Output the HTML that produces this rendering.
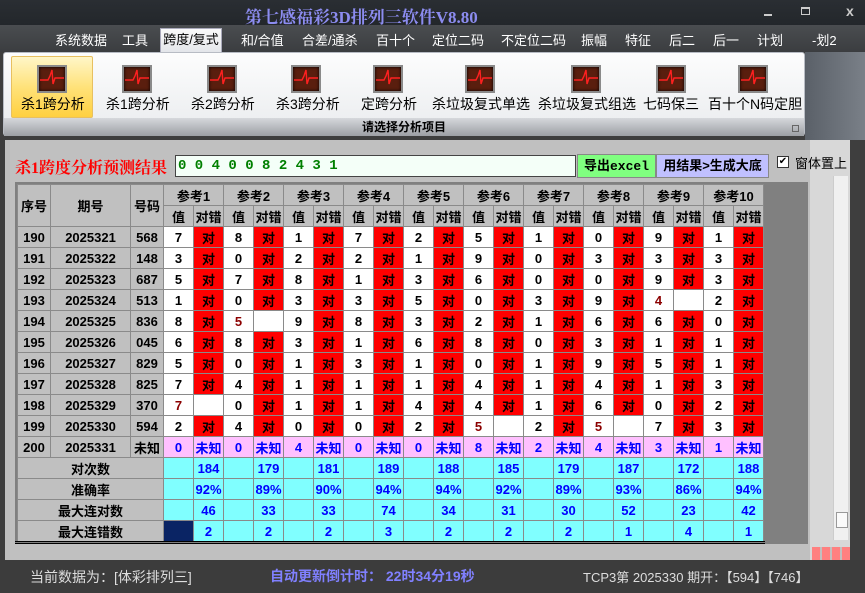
<!DOCTYPE html>
<html><head><meta charset="utf-8"><style>
*{margin:0;padding:0;box-sizing:border-box}
body{width:865px;height:593px;overflow:hidden;background:#3e3e3e;font-family:"Liberation Sans","Noto Sans CJK SC",sans-serif;position:relative}
.abs{position:absolute}
#title{left:0;top:0;width:865px;height:25px;background:linear-gradient(#2a2e33,#23272b);}
#menu{left:0;top:25px;width:865px;height:27px;background:linear-gradient(#4a4d50,#3b3d40);}
.mi{position:absolute;top:30px;color:#fff;font-size:13px;white-space:nowrap}
#tab{left:160px;top:28px;width:62px;height:24px;background:linear-gradient(#fafafa,#e4e6ea);border:1px solid #aab;border-bottom:none;color:#000;font-size:13px;text-align:center;line-height:22px}
#ribbon{left:3px;top:52px;width:802px;height:84px;background:linear-gradient(#fdfdfd,#e9ebee);border:1px solid #b8bcc4;border-radius:3px}
#rlab{left:4px;top:118px;width:800px;height:18px;background:linear-gradient(#d6d8dc,#9c9fa4);font-size:12px;font-weight:bold;text-align:center;line-height:18px;color:#000}
#sel{left:11px;top:56px;width:82px;height:62px;background:linear-gradient(#fff6c8,#ffe27a 50%,#ffd040);border:1px solid #e8c060;border-radius:2px}
.ic{position:absolute;top:65px;width:30px;height:28px;background:#5a1e0e;border:2px solid #8a8a8a;box-shadow:inset 0 0 3px #000}
.ic svg{position:absolute;left:0;top:0}
.il{position:absolute;top:94px;font-size:14px;color:#000;white-space:nowrap}
#panel{left:5px;top:140px;width:805px;height:420px;background:#c0c0c0}
#rside{left:810px;top:140px;width:40px;height:420px;background:#d8d8d8}
#sb{left:833px;top:176px;width:15px;height:364px;background:#f0f0f0;border-left:1px solid #ccc}
#grid{left:15px;top:182px;width:793px;height:362px;background:#808080}
table{position:absolute;left:17px;top:184px;border-collapse:collapse;table-layout:fixed;font-size:13px;font-weight:bold}
td{border:1px solid #8a8a8a;height:21px;text-align:center;padding:0;overflow:hidden;white-space:nowrap}
.h{background:#c0c0c0;color:#000}
.w{background:#fff;color:#000}
.r{background:#ff0000;color:#000}
.dr{color:#8b0000}
.p{background:#ffc0ff;color:#0000ff}
.c{background:#80ffff;color:#0000ff}
.nv{background:#0a2464}
#status{left:0;top:560px;width:865px;height:33px;background:#3c3c3c}
</style></head><body>
<div id="title" class="abs"></div>
<div class="abs" style="left:245px;top:3px;color:#8c8cf0;font-size:17px;font-weight:bold;font-family:'Liberation Serif','Noto Serif CJK SC',serif">第七感福彩3D排列三软件V8.80</div>
<div class="abs" style="left:764px;top:14px;width:8px;height:2px;background:#ccc"></div>
<div class="abs" style="left:801px;top:7px;width:9px;height:8px;border:1px solid #ccc;border-top-width:2px"></div>
<div class="abs" style="left:846px;top:3px;color:#ccc;font-size:14px;font-weight:bold">x</div>
<div id="menu" class="abs"></div>
<div class="mi" style="left:55px">系统数据</div>
<div class="mi" style="left:122px">工具</div>
<div id="tab" class="abs">跨度/复式</div>
<div class="mi" style="left:241px">和/合值</div>
<div class="mi" style="left:302px">合差/通杀</div>
<div class="mi" style="left:376px">百十个</div>
<div class="mi" style="left:432px">定位二码</div>
<div class="mi" style="left:501px">不定位二码</div>
<div class="mi" style="left:581px">振幅</div>
<div class="mi" style="left:625px">特征</div>
<div class="mi" style="left:669px">后二</div>
<div class="mi" style="left:713px">后一</div>
<div class="mi" style="left:757px">计划</div>
<div class="mi" style="left:812px">-划2</div>
<div class="abs" style="left:805px;top:52px;width:60px;height:88px;background:linear-gradient(90deg,#5a6068,#7a8088)"></div>
<div id="ribbon" class="abs"></div>
<div id="sel" class="abs"></div>
<div id="rlab" class="abs">请选择分析项目</div>
<div class="abs" style="left:792px;top:125px;width:7px;height:7px;border:1px solid #666"></div>

<div class="ic" style="left:37px"><svg width="26" height="24"><path d="M1 13H9L11 9L13 3L14 17L16 11H25" stroke="#ff2020" fill="none" stroke-width="1.4"/></svg></div>
<div class="ic" style="left:122px"><svg width="26" height="24"><path d="M1 13H9L11 9L13 3L14 17L16 11H25" stroke="#ff2020" fill="none" stroke-width="1.4"/></svg></div>
<div class="ic" style="left:207px"><svg width="26" height="24"><path d="M1 13H9L11 9L13 3L14 17L16 11H25" stroke="#ff2020" fill="none" stroke-width="1.4"/></svg></div>
<div class="ic" style="left:291px"><svg width="26" height="24"><path d="M1 13H9L11 9L13 3L14 17L16 11H25" stroke="#ff2020" fill="none" stroke-width="1.4"/></svg></div>
<div class="ic" style="left:373px"><svg width="26" height="24"><path d="M1 13H9L11 9L13 3L14 17L16 11H25" stroke="#ff2020" fill="none" stroke-width="1.4"/></svg></div>
<div class="ic" style="left:465px"><svg width="26" height="24"><path d="M1 13H9L11 9L13 3L14 17L16 11H25" stroke="#ff2020" fill="none" stroke-width="1.4"/></svg></div>
<div class="ic" style="left:571px"><svg width="26" height="24"><path d="M1 13H9L11 9L13 3L14 17L16 11H25" stroke="#ff2020" fill="none" stroke-width="1.4"/></svg></div>
<div class="ic" style="left:656px"><svg width="26" height="24"><path d="M1 13H9L11 9L13 3L14 17L16 11H25" stroke="#ff2020" fill="none" stroke-width="1.4"/></svg></div>
<div class="ic" style="left:738px"><svg width="26" height="24"><path d="M1 13H9L11 9L13 3L14 17L16 11H25" stroke="#ff2020" fill="none" stroke-width="1.4"/></svg></div>
<div class="il" style="left:21px">杀1跨分析</div>
<div class="il" style="left:106px">杀1跨分析</div>
<div class="il" style="left:191px">杀2跨分析</div>
<div class="il" style="left:276px">杀3跨分析</div>
<div class="il" style="left:361px">定跨分析</div>
<div class="il" style="left:432px">杀垃圾复式单选</div>
<div class="il" style="left:538px">杀垃圾复式组选</div>
<div class="il" style="left:643px">七码保三</div>
<div class="il" style="left:708px">百十个N码定胆</div>

<div id="panel" class="abs"></div>
<div id="rside" class="abs"></div>
<div id="sb" class="abs"></div>
<div class="abs" style="left:836px;top:512px;width:12px;height:16px;background:#fafafa;border:1px solid #999"></div>
<div class="abs" style="left:812px;top:547px;width:38px;height:13px;background:repeating-linear-gradient(90deg,#ff8080 0 8px,#c0c0c0 8px 10px)"></div>
<div class="abs" style="left:15px;top:155px;color:#ff0000;font-size:16px;font-weight:bold;font-family:'Liberation Serif','Noto Serif CJK SC',serif">杀1跨度分析预测结果</div>
<div class="abs" style="left:175px;top:155px;width:401px;height:22px;background:#f4fff8;border:1px solid #444;color:#008000;font-family:'Liberation Mono',monospace;font-weight:bold;font-size:14px;line-height:20px;padding-left:2px">0 0 4 0 0 8 2 4 3 1</div>
<div class="abs" style="left:577px;top:154px;width:79px;height:24px;background:#80ff80;border:1px solid #888;font-size:13px;font-weight:bold;line-height:22px;text-align:center">导出<span style="font-family:'Liberation Mono',monospace">excel</span></div>
<div class="abs" style="left:656px;top:154px;width:113px;height:24px;background:#c0c0ff;border:1px solid #888;font-size:13px;font-weight:bold;line-height:22px;text-align:center">用结果&gt;生成大底</div>
<div class="abs" style="left:777px;top:156px;width:12px;height:12px;background:#fff;border:1px solid #333;font-size:10px;line-height:10px;text-align:center">✔</div>
<div class="abs" style="left:795px;top:153px;font-size:13px">窗体置上</div>

<div id="grid" class="abs"></div>
<table>
<colgroup><col style="width:33px"><col style="width:80px"><col style="width:33px">
<col style="width:30px"><col style="width:30px"><col style="width:30px"><col style="width:30px"><col style="width:30px"><col style="width:30px"><col style="width:30px"><col style="width:30px"><col style="width:30px"><col style="width:30px"><col style="width:30px"><col style="width:30px"><col style="width:30px"><col style="width:30px"><col style="width:30px"><col style="width:30px"><col style="width:30px"><col style="width:30px"><col style="width:30px"><col style="width:30px"></colgroup>
<tr class="h"><td class="h" rowspan="2">序号</td><td class="h" rowspan="2">期号</td><td class="h" rowspan="2">号码</td><td class="h" colspan="2">参考1</td><td class="h" colspan="2">参考2</td><td class="h" colspan="2">参考3</td><td class="h" colspan="2">参考4</td><td class="h" colspan="2">参考5</td><td class="h" colspan="2">参考6</td><td class="h" colspan="2">参考7</td><td class="h" colspan="2">参考8</td><td class="h" colspan="2">参考9</td><td class="h" colspan="2">参考10</td></tr>
<tr><td class="h">值</td><td class="h">对错</td><td class="h">值</td><td class="h">对错</td><td class="h">值</td><td class="h">对错</td><td class="h">值</td><td class="h">对错</td><td class="h">值</td><td class="h">对错</td><td class="h">值</td><td class="h">对错</td><td class="h">值</td><td class="h">对错</td><td class="h">值</td><td class="h">对错</td><td class="h">值</td><td class="h">对错</td><td class="h">值</td><td class="h">对错</td></tr>
<tr><td class="h">190</td><td class="h">2025321</td><td class="h">568</td><td class="w">7</td><td class="r">对</td><td class="w">8</td><td class="r">对</td><td class="w">1</td><td class="r">对</td><td class="w">7</td><td class="r">对</td><td class="w">2</td><td class="r">对</td><td class="w">5</td><td class="r">对</td><td class="w">1</td><td class="r">对</td><td class="w">0</td><td class="r">对</td><td class="w">9</td><td class="r">对</td><td class="w">1</td><td class="r">对</td></tr>
<tr><td class="h">191</td><td class="h">2025322</td><td class="h">148</td><td class="w">3</td><td class="r">对</td><td class="w">0</td><td class="r">对</td><td class="w">2</td><td class="r">对</td><td class="w">2</td><td class="r">对</td><td class="w">1</td><td class="r">对</td><td class="w">9</td><td class="r">对</td><td class="w">0</td><td class="r">对</td><td class="w">3</td><td class="r">对</td><td class="w">3</td><td class="r">对</td><td class="w">3</td><td class="r">对</td></tr>
<tr><td class="h">192</td><td class="h">2025323</td><td class="h">687</td><td class="w">5</td><td class="r">对</td><td class="w">7</td><td class="r">对</td><td class="w">8</td><td class="r">对</td><td class="w">1</td><td class="r">对</td><td class="w">3</td><td class="r">对</td><td class="w">6</td><td class="r">对</td><td class="w">0</td><td class="r">对</td><td class="w">0</td><td class="r">对</td><td class="w">9</td><td class="r">对</td><td class="w">3</td><td class="r">对</td></tr>
<tr><td class="h">193</td><td class="h">2025324</td><td class="h">513</td><td class="w">1</td><td class="r">对</td><td class="w">0</td><td class="r">对</td><td class="w">3</td><td class="r">对</td><td class="w">3</td><td class="r">对</td><td class="w">5</td><td class="r">对</td><td class="w">0</td><td class="r">对</td><td class="w">3</td><td class="r">对</td><td class="w">9</td><td class="r">对</td><td class="w dr">4</td><td class="w"></td><td class="w">2</td><td class="r">对</td></tr>
<tr><td class="h">194</td><td class="h">2025325</td><td class="h">836</td><td class="w">8</td><td class="r">对</td><td class="w dr">5</td><td class="w"></td><td class="w">9</td><td class="r">对</td><td class="w">8</td><td class="r">对</td><td class="w">3</td><td class="r">对</td><td class="w">2</td><td class="r">对</td><td class="w">1</td><td class="r">对</td><td class="w">6</td><td class="r">对</td><td class="w">6</td><td class="r">对</td><td class="w">0</td><td class="r">对</td></tr>
<tr><td class="h">195</td><td class="h">2025326</td><td class="h">045</td><td class="w">6</td><td class="r">对</td><td class="w">8</td><td class="r">对</td><td class="w">3</td><td class="r">对</td><td class="w">1</td><td class="r">对</td><td class="w">6</td><td class="r">对</td><td class="w">8</td><td class="r">对</td><td class="w">0</td><td class="r">对</td><td class="w">3</td><td class="r">对</td><td class="w">1</td><td class="r">对</td><td class="w">1</td><td class="r">对</td></tr>
<tr><td class="h">196</td><td class="h">2025327</td><td class="h">829</td><td class="w">5</td><td class="r">对</td><td class="w">0</td><td class="r">对</td><td class="w">1</td><td class="r">对</td><td class="w">3</td><td class="r">对</td><td class="w">1</td><td class="r">对</td><td class="w">0</td><td class="r">对</td><td class="w">1</td><td class="r">对</td><td class="w">9</td><td class="r">对</td><td class="w">5</td><td class="r">对</td><td class="w">1</td><td class="r">对</td></tr>
<tr><td class="h">197</td><td class="h">2025328</td><td class="h">825</td><td class="w">7</td><td class="r">对</td><td class="w">4</td><td class="r">对</td><td class="w">1</td><td class="r">对</td><td class="w">1</td><td class="r">对</td><td class="w">1</td><td class="r">对</td><td class="w">4</td><td class="r">对</td><td class="w">1</td><td class="r">对</td><td class="w">4</td><td class="r">对</td><td class="w">1</td><td class="r">对</td><td class="w">3</td><td class="r">对</td></tr>
<tr><td class="h">198</td><td class="h">2025329</td><td class="h">370</td><td class="w dr">7</td><td class="w"></td><td class="w">0</td><td class="r">对</td><td class="w">1</td><td class="r">对</td><td class="w">1</td><td class="r">对</td><td class="w">4</td><td class="r">对</td><td class="w">4</td><td class="r">对</td><td class="w">1</td><td class="r">对</td><td class="w">6</td><td class="r">对</td><td class="w">0</td><td class="r">对</td><td class="w">2</td><td class="r">对</td></tr>
<tr><td class="h">199</td><td class="h">2025330</td><td class="h">594</td><td class="w">2</td><td class="r">对</td><td class="w">4</td><td class="r">对</td><td class="w">0</td><td class="r">对</td><td class="w">0</td><td class="r">对</td><td class="w">2</td><td class="r">对</td><td class="w dr">5</td><td class="w"></td><td class="w">2</td><td class="r">对</td><td class="w dr">5</td><td class="w"></td><td class="w">7</td><td class="r">对</td><td class="w">3</td><td class="r">对</td></tr>
<tr><td class="h">200</td><td class="h">2025331</td><td class="h">未知</td><td class="p">0</td><td class="p">未知</td><td class="p">0</td><td class="p">未知</td><td class="p">4</td><td class="p">未知</td><td class="p">0</td><td class="p">未知</td><td class="p">0</td><td class="p">未知</td><td class="p">8</td><td class="p">未知</td><td class="p">2</td><td class="p">未知</td><td class="p">4</td><td class="p">未知</td><td class="p">3</td><td class="p">未知</td><td class="p">1</td><td class="p">未知</td></tr>
<tr><td class="h" colspan="3">对次数</td><td class="c"></td><td class="c">184</td><td class="c"></td><td class="c">179</td><td class="c"></td><td class="c">181</td><td class="c"></td><td class="c">189</td><td class="c"></td><td class="c">188</td><td class="c"></td><td class="c">185</td><td class="c"></td><td class="c">179</td><td class="c"></td><td class="c">187</td><td class="c"></td><td class="c">172</td><td class="c"></td><td class="c">188</td></tr>
<tr><td class="h" colspan="3">准确率</td><td class="c"></td><td class="c">92%</td><td class="c"></td><td class="c">89%</td><td class="c"></td><td class="c">90%</td><td class="c"></td><td class="c">94%</td><td class="c"></td><td class="c">94%</td><td class="c"></td><td class="c">92%</td><td class="c"></td><td class="c">89%</td><td class="c"></td><td class="c">93%</td><td class="c"></td><td class="c">86%</td><td class="c"></td><td class="c">94%</td></tr>
<tr><td class="h" colspan="3">最大连对数</td><td class="c"></td><td class="c">46</td><td class="c"></td><td class="c">33</td><td class="c"></td><td class="c">33</td><td class="c"></td><td class="c">74</td><td class="c"></td><td class="c">34</td><td class="c"></td><td class="c">31</td><td class="c"></td><td class="c">30</td><td class="c"></td><td class="c">52</td><td class="c"></td><td class="c">23</td><td class="c"></td><td class="c">42</td></tr>
<tr><td class="h" colspan="3">最大连错数</td><td class="nv"></td><td class="c">2</td><td class="c"></td><td class="c">2</td><td class="c"></td><td class="c">2</td><td class="c"></td><td class="c">3</td><td class="c"></td><td class="c">2</td><td class="c"></td><td class="c">2</td><td class="c"></td><td class="c">2</td><td class="c"></td><td class="c">1</td><td class="c"></td><td class="c">4</td><td class="c"></td><td class="c">1</td></tr>
</table>
<div class="abs" style="left:15px;top:541px;width:750px;height:3px;border-top:1px solid #000;border-bottom:1px solid #000"></div>

<div id="status" class="abs"></div>
<div class="abs" style="left:30px;top:567px;color:#ddd;font-size:14px">当前数据为：[体彩排列三]</div>
<div class="abs" style="left:270px;top:566px;color:#8080ff;font-size:14px;font-weight:bold">自动更新倒计时： 22时34分19秒</div>
<div class="abs" style="left:583px;top:567px;color:#ddd;font-size:13px">TCP3第 2025330 期开：【594】【746】</div>
</body></html>
